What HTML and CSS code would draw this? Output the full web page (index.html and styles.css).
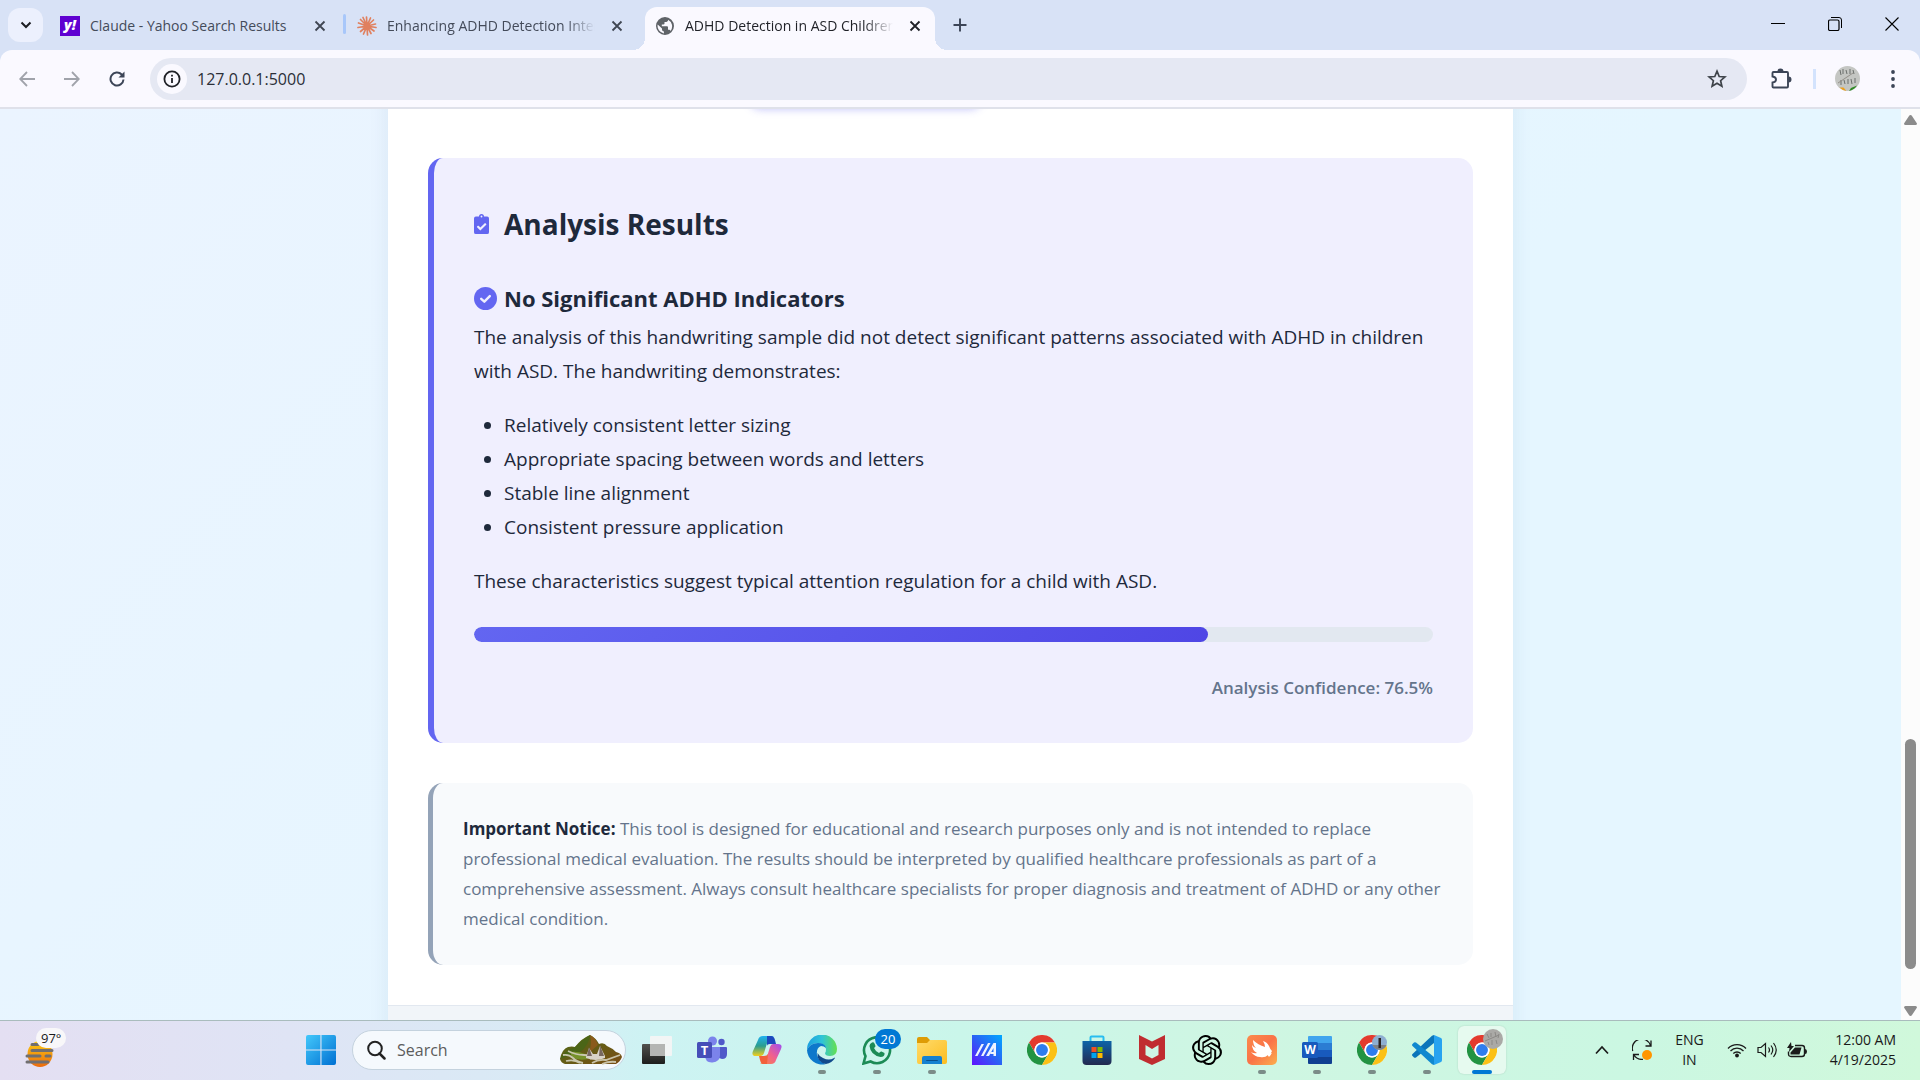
FILE: index.html
```html
<!DOCTYPE html>
<html lang="en">
<head>
<meta charset="utf-8">
<title>ADHD Detection in ASD Children</title>
<link rel="stylesheet" href="styles.css">
</head>
<body>
<svg class="defs" aria-hidden="true">
  <defs>
    <symbol id="close" viewBox="0 0 12 12"><path d="M1.500 1.500l9 9M10.500 1.500l-9 9" fill="none" stroke="currentColor" stroke-width="1.800"/></symbol>
    <symbol id="chrome" viewBox="0 0 48 48">
      <circle cx="24" cy="24" r="24" fill="#fff"/>
      <path d="M3.200 12A24 24 0 0 1 44.800 12H24a12 12 0 0 0-10.400 18z" fill="#e33b2e"/>
      <path d="M3.200 12A24 24 0 0 0 24 48l10.400-18A12 12 0 0 1 13.600 30z" fill="#229342"/>
      <path d="M44.800 12A24 24 0 0 1 24 48l10.400-18A12 12 0 0 0 24 12z" fill="#fbc116"/>
      <circle cx="24" cy="24" r="12" fill="#fff"/><circle cx="24" cy="24" r="9.500" fill="#2f7ded"/>
    </symbol>
    <linearGradient id="win" x1="0" y1="0" x2="1" y2="1"><stop offset="0" stop-color="#43c8fb"/><stop offset="1" stop-color="#0070d2"/></linearGradient>
    <linearGradient id="edgeTop" x1="0" y1="0" x2="1" y2="0"><stop offset="0" stop-color="#1c9fe0"/><stop offset=".5" stop-color="#2fc4d8"/><stop offset="1" stop-color="#66e04f"/></linearGradient>
    <linearGradient id="cpA" x1="0" y1="0" x2="0" y2="1"><stop offset="0" stop-color="#1fb1f0"/><stop offset=".5" stop-color="#2b9d8f"/><stop offset="1" stop-color="#f2cf1c"/></linearGradient>
    <linearGradient id="cpB" x1="1" y1="0" x2="0" y2="1"><stop offset="0" stop-color="#a04df0"/><stop offset=".5" stop-color="#f0608f"/><stop offset="1" stop-color="#fb8a3c"/></linearGradient>
    <linearGradient id="folder" x1="0" y1="0" x2="1" y2="1"><stop offset="0" stop-color="#ffdb6b"/><stop offset="1" stop-color="#fcbd20"/></linearGradient>
    <linearGradient id="asus" x1="0" y1="1" x2="1" y2="0"><stop offset="0" stop-color="#6011ff"/><stop offset=".5" stop-color="#2b62f5"/><stop offset="1" stop-color="#00a8ff"/></linearGradient>
    <linearGradient id="store" x1="0" y1="0" x2="0" y2="1"><stop offset="0" stop-color="#0d64a8"/><stop offset="1" stop-color="#23294f"/></linearGradient>
    <linearGradient id="sun" x1="0" y1="0" x2="0" y2="1"><stop offset="0" stop-color="#fccc12"/><stop offset="1" stop-color="#ec6a0c"/></linearGradient>
    <linearGradient id="hill" x1="0" y1="0" x2="1" y2="1"><stop offset="0" stop-color="#4d6b18"/><stop offset="1" stop-color="#7b4d14"/></linearGradient>
    <linearGradient id="dark" x1="0" y1="0" x2="0" y2="1"><stop offset="0" stop-color="#50514e"/><stop offset="1" stop-color="#1d1e1d"/></linearGradient>
    <linearGradient id="swift" x1="0" y1="0" x2="1" y2="1"><stop offset="0" stop-color="#fb8b4c"/><stop offset=".5" stop-color="#fa7348"/><stop offset="1" stop-color="#fcae4c"/></linearGradient>
  </defs>
</svg>

<header class="tabstrip">
  <button class="tab-search" aria-label="Search tabs"><svg viewBox="0 0 12 12" width="12" height="12"><path d="M1.500 3.500L6 8l4.500-4.500" fill="none" stroke="#1b1d22" stroke-width="2"/></svg></button>
  <nav class="tabs" aria-label="Tabs">
    <div class="tab">
      <span class="yahoo" aria-hidden="true">y!</span>
      <a class="tab-title" href="#">Claude - Yahoo Search Results</a>
      <button class="tab-close" aria-label="Close tab"><svg width="12" height="12"><use href="#close"/></svg></button>
    </div>
    <div class="tab tab-divided">
      <svg class="favicon" viewBox="0 0 20 20" width="20" height="20"><g stroke="#e0805f" stroke-width="1.700" stroke-linecap="round"><path d="M10 10L9.500 1M10 10l3.500-8M10 10l6.500-6M10 10l8.500-2M10 10l9 1.500M10 10l7 5M10 10l4 7.500M10 10l.5 9M10 10l-3.500 8M10 10l-6.500 5.500M10 10l-9 1.500M10 10L1.500 7M10 10L3.500 3.500M10 10L6 1.500"/></g></svg>
      <a class="tab-title" href="#">Enhancing ADHD Detection Inter</a>
      <button class="tab-close" aria-label="Close tab"><svg width="12" height="12"><use href="#close"/></svg></button>
    </div>
    <div class="tab tab-active">
      <svg class="favicon" viewBox="2 2 20 20" width="20" height="20"><path fill="#5f6368" d="M12 3a9 9 0 1 0 0 18 9 9 0 0 0 0-18zm-1 16.400A7.500 7.500 0 0 1 4.700 10.500L9 14.500v1c0 1 .8 1.800 1.800 1.800zM17.500 17c-.2-.7-.9-1.200-1.700-1.200H15v-2.600c0-.5-.4-.9-.9-.9H8.800v-1.800h1.800c.5 0 .9-.4.900-.9V7.900h1.800c1 0 1.800-.8 1.800-1.800v-.4A7.500 7.500 0 0 1 17.500 17z"/></svg>
      <a class="tab-title" href="#" aria-current="page">ADHD Detection in ASD Children</a>
      <button class="tab-close" aria-label="Close tab"><svg width="12" height="12"><use href="#close"/></svg></button>
    </div>
  </nav>
  <button class="new-tab" aria-label="New tab"><svg viewBox="0 0 14 14" width="14" height="14"><path d="M7 0.500v13M.5 7h13" stroke="#3c4557" stroke-width="1.900"/></svg></button>
  <div class="window-controls">
    <button aria-label="Minimize"><svg viewBox="0 0 14 14" width="14" height="14"><path d="M0 6.500h14" stroke="#000"/></svg></button>
    <button aria-label="Restore"><svg viewBox="0 0 14 14" width="14" height="14"><path d="M3 .5h8q2.500 0 2.500 2.500v8" fill="none" stroke="#000"/><rect x=".5" y="3" width="10.500" height="10.500" rx="1.500" fill="none" stroke="#000" stroke-width="1.200"/></svg></button>
    <button aria-label="Close"><svg viewBox="0 0 14 14" width="14" height="14"><path d="M.5.5l13 13M13.500.5l-13 13" stroke="#000" stroke-width="1.100"/></svg></button>
  </div>
</header>

<div class="toolbar">
  <button class="tool" aria-label="Back"><svg viewBox="0 0 16 16" width="16" height="16"><path d="M16 8H1.500M8 1L1.200 8 8 15" fill="none" stroke="#a0a3ab" stroke-width="1.800"/></svg></button>
  <button class="tool" aria-label="Forward"><svg viewBox="0 0 16 16" width="16" height="16"><path d="M0 8h14.500M8 1l6.800 7L8 15" fill="none" stroke="#a0a3ab" stroke-width="1.800"/></svg></button>
  <button class="tool" aria-label="Reload"><svg viewBox="0 0 16 16" width="16" height="16"><path d="M14.500 8.500A6.500 6.500 0 1 1 12.700 3.500L14.500 5.500" fill="none" stroke="#3c4557" stroke-width="2"/><path d="M15.500.5v6h-6z" fill="#3c4557"/></svg></button>
  <div class="omnibox">
    <button class="site-info" aria-label="Site information"><svg viewBox="0 0 18 18" width="18" height="18"><circle cx="9" cy="9" r="7.600" fill="none" stroke="#1f2127" stroke-width="1.800"/><path d="M9 8v5M9 4.800v1.800" stroke="#1f2127" stroke-width="1.800"/></svg></button>
    <input class="address" type="text" aria-label="Address" value="127.0.0.1:5000">
    <button class="star" aria-label="Bookmark this tab"><svg viewBox="0 0 20 20" width="20" height="20"><path d="M10 2.200l2.200 5.300 5.700.5-4.300 3.700 1.300 5.600L10 14.300l-4.900 3 1.300-5.600L2.100 8l5.700-.5z" fill="none" stroke="#3e4349" stroke-width="1.700"/></svg></button>
  </div>
  <button class="tool" aria-label="Extensions"><svg viewBox="0 0 22 22" width="22" height="22"><path d="M3.500 4H17q1 0 1 1v13.500q0 1-1 1H3.500q-1 0-1-1V14.500q3.500-.4 3.500-3t-3.500-3V5q0-1 1-1z" fill="none" stroke="#3c4557" stroke-width="1.900"/><path d="M7.500 3.500a3 3 0 0 1 6 0zM18.500 8.500a3 3 0 0 1 0 6z" fill="#3c4557"/></svg></button>
  <span class="tool-divider"></span>
  <button class="tool" aria-label="Profile"><svg viewBox="0 0 25 25" width="25" height="25"><circle cx="12.500" cy="12.500" r="12.500" fill="#c4c6c3"/><path d="M5 4l1 5M8 3v5M11 4l1 4M15 3v5M18 4l1 4M6 14v5M9 14l1 4M13 13v5M16 13l1 5M20 12v5" stroke="#6b6f6c"/><path d="M3 17L18 7" stroke="#94908a"/><path d="M4.500 21.500h4l3 3.500a12.500 12.500 0 0 1-7-3.500z" fill="#eea01d"/><path d="M16 22l6-2.500a12.500 12.500 0 0 1-8 5.500z" fill="#2f8a25"/></svg></button>
  <button class="tool" aria-label="Menu"><svg viewBox="0 0 4 18" width="4" height="18" fill="#3c4557"><circle cx="2" cy="2" r="1.900"/><circle cx="2" cy="9" r="1.900"/><circle cx="2" cy="16" r="1.900"/></svg></button>
</div>

<div class="viewport">
  <div class="page">
    <main class="container">
      <div class="content">
        <div class="action-glow"></div>
        <section class="result">
          <h2><svg viewBox="0 0 384 512" width="15" height="20"><path fill="#6366f1" d="M336 64h-80a64 64 0 0 0-128 0H48a48 48 0 0 0-48 48v352a48 48 0 0 0 48 48h288a48 48 0 0 0 48-48V112a48 48 0 0 0-48-48zM192 40a24 24 0 1 1 0 48 24 24 0 0 1 0-48zm121 234L170 416q-8 8-16 0l-76-76q-8-8 0-17l22-21q8-8 17 0l46 46 112-111q8-8 17 0l21 21q8 8 0 16z"/></svg>Analysis Results</h2>
          <h3><svg viewBox="0 0 24 24" width="23" height="23"><circle cx="12" cy="12" r="12" fill="#6366f1"/><path d="M7.500 12.300l3.300 3L16.500 9.500" fill="none" stroke="#f0effe" stroke-width="2.500" stroke-linecap="round" stroke-linejoin="round"/></svg>No Significant ADHD Indicators</h3>
          <p>The analysis of this handwriting sample did not detect significant patterns associated with ADHD in children with ASD. The handwriting demonstrates:</p>
          <ul>
            <li>Relatively consistent letter sizing</li>
            <li>Appropriate spacing between words and letters</li>
            <li>Stable line alignment</li>
            <li>Consistent pressure application</li>
          </ul>
          <p>These characteristics suggest typical attention regulation for a child with ASD.</p>
          <div class="meter" role="progressbar" aria-label="Analysis Confidence" aria-valuenow="76.5" aria-valuemin="0" aria-valuemax="100"><div class="meter-fill" style="width:76.5%"></div></div>
          <p class="confidence">Analysis Confidence: 76.5%</p>
        </section>
        <section class="notice"><p><strong>Important Notice:</strong> This tool is designed for educational and research purposes only and is not intended to replace professional medical evaluation. The results should be interpreted by qualified healthcare professionals as part of a comprehensive assessment. Always consult healthcare specialists for proper diagnosis and treatment of ADHD or any other medical condition.</p></section>
      </div>
      <footer class="page-footer"></footer>
    </main>
  </div>
  <div class="scrollbar" aria-hidden="true">
    <svg viewBox="0 0 13 10" width="13" height="10"><path d="M6.500 0q1 0 1.500 1l5 7.500q0 1.500-1.500 1.500h-10Q0 10 0 8.500L5 1q.5-1 1.500-1z" fill="#8b8b8b"/></svg>
    <div class="track"><div class="thumb"></div></div>
    <svg viewBox="0 0 13 10" width="13" height="10"><path d="M6.500 10q1 0 1.500-1l5-7.500Q13 0 11.500 0h-10Q0 0 0 1.500L5 9q.5 1 1.500 1z" fill="#8b8b8b"/></svg>
  </div>
</div>

<footer class="taskbar">
  <button class="weather" aria-label="Weather">
    <svg viewBox="0 0 30 30" width="30" height="30"><ellipse cx="15" cy="15" rx="12.500" ry="13" fill="url(#sun)"/><path d="M7 5.500h6M7 11.500h20M2 17h13M21 17h4M2 23h21" stroke="#716f70" stroke-width="3" stroke-linecap="round"/></svg>
    <span class="temp">97°</span>
  </button>
  <div class="apps">
    <button class="app" aria-label="Start"><svg viewBox="0 0 30 30" width="30" height="30"><path fill="url(#win)" d="M2 0h12.400v14.400H0V2q0-2 2-2zM15.500 0H28q2 0 2 2v12.400H15.500zM0 15.500h14.400V30H2q-2 0-2-2zM15.500 15.500H30V28q0 2-2 2H15.500z"/></svg></button>
    <div class="search">
      <svg viewBox="0 0 20 20" width="20" height="20"><circle cx="9" cy="8.500" r="6.800" fill="none" stroke="#222" stroke-width="2"/><path d="M13.500 13.500l5 5" stroke="#222" stroke-width="2.500" stroke-linecap="round"/></svg>
      <input type="text" aria-label="Search" placeholder="Search">
      <svg viewBox="0 0 62 30" width="62" height="30">
        <path d="M0 24Q2 14 8 12q4-1 7 0Q22 3 30 0q6 3 9 9 5-2 8 2 5 2 9 6 5 1 6 5-2 5-6 7H5q-4-1-5-5z" fill="url(#hill)"/>
        <path d="M30 0q6 3 8 10l-9 8q3-9 1-18z" fill="#8a5a1c"/>
        <path d="M15 12q8-8 15-12-2 12-10 17-8 2-20 7 4-8 15-12z" fill="#4b6517"/>
        <path d="M10 17q8-1 15 2l3 5q-10 2-16-2z" fill="#76912a"/>
        <path d="M3 20q6-1 10 3t10 5M8 16q8 4 16 4t6 4M6 26q8-2 14 2" stroke="#c9c7ae" stroke-width="1.800" fill="none"/>
        <path d="M26 22l3-9 4 6h4l3-8 5 10v2q-9 4-19 0z" fill="#d8d3c8"/>
        <path d="M29 12l3 9h-5zM40 10l4 11h-5z" fill="#77675f"/>
        <path d="M32 28q6-4 14-3l14-5M42 29q7-3 14-2" stroke="#c9c2a8" stroke-width="1.800" fill="none"/>
      </svg>
    </div>
    <button class="app" aria-label="Task view"><svg viewBox="0 0 30 30" width="30" height="30"><rect x="0" y="9" width="23" height="20" rx="1" fill="url(#dark)"/><rect x="8" y="1" width="22" height="20" rx="1" fill="#f3f4f4" opacity=".95"/><path d="M8 9h15v12H8z" fill="#b4b5b3"/></svg></button>
    <button class="app" aria-label="Teams"><svg viewBox="0 0 30 30" width="30" height="30"><circle cx="15.500" cy="6" r="4.500" fill="#7b83eb"/><circle cx="24.500" cy="7" r="3.200" fill="#5059c9"/><path d="M20 12h9q1 0 1 1v6q0 5-5 5-3 0-5-3z" fill="#5059c9"/><path d="M8 12h15v8q0 7-7.500 7.500T8 20z" fill="#7b83eb"/><rect y="7" width="15" height="16" rx="1.500" fill="#464eb8"/><text x="7.500" y="20" text-anchor="middle" class="glyph" font-size="13">T</text></svg></button>
    <button class="app" aria-label="Copilot"><svg viewBox="0 0 30 30" width="30" height="30"><path d="M18 1h-7Q7 1 6 5L1 16q-2 5 3 5h5q2 0 3-3l4-13q1-3 6-3-1-1-4-1z" fill="url(#cpA)"/><path d="M15 1h4q3 0 4 4l1 4h-6q-3 0-3 2z" fill="#1c48bd"/><path d="M12 29h7q4 0 5-4l5-11q2-5-3-5h-5q-2 0-3 3l-4 13q-1 3-6 3 1 1 4 1z" fill="url(#cpB)"/><path d="M15 29h-4q-2 0-3-4l-1-4h5q3 0 4-2z" fill="#f2603c"/></svg></button>
    <button class="app running" aria-label="Edge"><svg viewBox="0 0 30 30" width="30" height="30"><path d="M0 15A15 15 0 0 1 30 14q0 7-7 7-5 0-5-3 1-1 1-4-1-6-8-6Q3 8 0 15z" fill="url(#edgeTop)"/><path d="M0 15Q3 8 11 8q7 0 8 5-2-2-5-2-5 2-4 9 2 7 9 9A15 15 0 0 1 0 15z" fill="#0d78cb"/><path d="M10.500 18q-1 9 8.500 11 6-1 9-6 0-1-1 0-5 3-11 0-4-2-5.500-5z" fill="#114a8c"/></svg></button>
    <button class="app running" aria-label="WhatsApp"><svg viewBox="0 0 30 30" width="30" height="30"><path d="M1.500 28.500l2-7.300A13 13 0 1 1 8.600 26.500z" fill="none" stroke="#1c8b56" stroke-width="2.600"/><path d="M10 7.500q1.500-1 2.500 1l1 2.500q0 1-1.500 2 1.500 3.500 5 5 1.500-2 2.500-1.500l3 1.500q.5 4-4 4-10-2-11-11 0-2.500 2.500-3.500z" fill="#1c8b56"/></svg><span class="badge">20</span></button>
    <button class="app running" aria-label="File Explorer"><svg viewBox="0 0 30 30" width="30" height="30"><path d="M0 4q0-2 2-2h8l3 3h15v6H0z" fill="#de9c06"/><path d="M0 8h10l3-3h15q2 0 2 2v20q0 2-2 2H2q-2 0-2-2z" fill="url(#folder)"/><path d="M5 29v-6q0-2 2-2h16q2 0 2 2v6z" fill="#1681d0"/><path d="M9 26q0-1 1-1h10q1 0 1 1z" fill="#0a4f8c"/></svg></button>
    <button class="app" aria-label="MyASUS"><svg viewBox="0 0 30 30" width="30" height="30"><path d="M0 0h30v30H0z" fill="url(#asus)"/><path d="M3 21L9.500 9h2.500L5.500 21zM9 21L16 8h2.500L11.500 21zM14 21l7.500-13H24v13h-2.500V13L17 21z" fill="#eef3ff"/><path d="M19 17h4v2h-5z" fill="#eef3ff"/></svg></button>
    <button class="app" aria-label="Chrome"><svg width="30" height="30"><use href="#chrome"/></svg></button>
    <button class="app" aria-label="Microsoft Store"><svg viewBox="0 0 30 30" width="30" height="30"><path d="M8.500 7V2.500q0-1 1-1h11q1 0 1 1V7" fill="none" stroke="#29bdf0" stroke-width="2"/><path d="M.5 6h29v20q0 4-4 4h-21q-4 0-4-4z" fill="url(#store)"/><path d="M9.500 12h5v5h-5z" fill="#f25022"/><path d="M15.500 12h5v5h-5z" fill="#7fba00"/><path d="M9.500 18h5v5h-5z" fill="#00a4ef"/><path d="M15.500 18h5v5h-5z" fill="#ffb900"/></svg></button>
    <button class="app" aria-label="McAfee"><svg viewBox="0 0 30 30" width="30" height="30"><path d="M2 0l13 6.500L28 0v24l-13 6-13-6zM8.500 10v10l6.500 3.500 6.500-3.500V10L15 14z" fill="#c02c30" fill-rule="evenodd"/></svg></button>
    <button class="app" aria-label="ChatGPT"><svg viewBox="0 0 24 24" width="30" height="30"><path d="M22.2819 9.8211a5.9847 5.9847 0 0 0-.5157-4.9108 6.0462 6.0462 0 0 0-6.5098-2.9A6.0651 6.0651 0 0 0 4.9807 4.1818a5.9847 5.9847 0 0 0-3.9977 2.9 6.0462 6.0462 0 0 0 .7427 7.0966 5.98 5.98 0 0 0 .511 4.9107 6.051 6.051 0 0 0 6.5146 2.9001A5.9847 5.9847 0 0 0 13.2599 24a6.0557 6.0557 0 0 0 5.7718-4.2058 5.9894 5.9894 0 0 0 3.9977-2.9001 6.0557 6.0557 0 0 0-.7475-7.0729zm-9.022 12.6081a4.4755 4.4755 0 0 1-2.8764-1.0408l.1419-.0804 4.7783-2.7582a.7948.7948 0 0 0 .3927-.6813v-6.7369l2.02 1.1686a.071.071 0 0 1 .038.052v5.5826a4.504 4.504 0 0 1-4.4945 4.4944zm-9.6607-4.1254a4.4708 4.4708 0 0 1-.5346-3.0137l.142.0852 4.783 2.7582a.7712.7712 0 0 0 .7806 0l5.8428-3.3685v2.3324a.0804.0804 0 0 1-.0332.0615L9.74 19.9502a4.4992 4.4992 0 0 1-6.1408-1.6464zM2.3408 7.8956a4.485 4.485 0 0 1 2.3655-1.9728V11.6a.7664.7664 0 0 0 .3879.6765l5.8144 3.3543-2.0201 1.1685a.0757.0757 0 0 1-.071 0l-4.8303-2.7865A4.504 4.504 0 0 1 2.3408 7.872zm16.5963 3.8558L13.1038 8.364 15.1192 7.2a.0757.0757 0 0 1 .071 0l4.8303 2.7913a4.4944 4.4944 0 0 1-.6765 8.1042v-5.6772a.79.79 0 0 0-.407-.667zm2.0107-3.0231l-.142-.0852-4.7735-2.7818a.7759.7759 0 0 0-.7854 0L9.409 9.2297V6.8974a.0662.0662 0 0 1 .0284-.0615l4.8303-2.7866a4.4992 4.4992 0 0 1 6.6802 4.66zM8.3065 12.863l-2.02-1.1638a.0804.0804 0 0 1-.038-.0567V6.0742a4.4992 4.4992 0 0 1 7.3757-3.4537l-.142.0805L8.704 5.459a.7948.7948 0 0 0-.3927.6813zm1.0976-2.3654l2.602-1.4998 2.6069 1.4998v2.9994l-2.5974 1.4997-2.6067-1.4997Z"/></svg></button>
    <button class="app running" aria-label="Swift"><svg viewBox="0 0 30 30" width="30" height="30"><rect width="30" height="30" rx="5" fill="url(#swift)"/><path d="M6 5q0 5 3 8-3-1-4-3 0 5 5 8-3 1-6-1 4 5 9 5 5 1 8-2l2 1 1-3 1-2q-2-2-3-5-2-4-6-5 2 3 2 6Q11 10 6 5z" fill="#fff"/><path d="M20 19l5-1-3 4z" fill="#fff"/></svg></button>
    <button class="app running" aria-label="Word"><svg viewBox="0 0 30 30" width="30" height="30"><path d="M7 1h22q1 0 1 1v6H6V2q0-1 1-1z" fill="#41a5ee"/><path d="M6 8h24v7H6z" fill="#2b7cd3"/><path d="M6 15h24v7H6z" fill="#185abd"/><path d="M6 22h24v6q0 1-1 1H7q-1 0-1-1z" fill="#103f91"/><rect y="7" width="16" height="16" rx="1.500" fill="#185abd"/><text x="8" y="19" text-anchor="middle" class="glyph" font-size="12">W</text></svg></button>
    <button class="app running" aria-label="Chrome"><svg viewBox="0 0 30 30" width="30" height="30"><use href="#chrome" width="30" height="30"/><circle cx="22.500" cy="7.500" r="7.500" fill="#8eaed1"/><path d="M15.500 10h14a7.500 7.500 0 0 1-14 0z" fill="#7d8187"/><path d="M21.500 3h2.500v10h-2.500z" fill="#2b2323"/></svg></button>
    <button class="app running" aria-label="Visual Studio Code"><svg viewBox="0 0 30 30" width="30" height="30"><path d="M22 0l7 3q1 .5 1 2v20q0 1.500-1 2l-7 3z" fill="#27a3f0"/><path d="M22 0v8L4 22.500q-1 .7-2 0L.5 21q-1-1 0-2L20 .8z" fill="#0b75ba"/><path d="M22 30v-8L4 7.500q-1-.7-2 0L.5 9q-1 1 0 2L20 29.200z" fill="#1088cf"/></svg></button>
    <button class="app running app-current" aria-label="Chrome, current window"><svg viewBox="0 0 30 30" width="30" height="30"><use href="#chrome" width="30" height="30"/></svg><svg class="avatar-badge" viewBox="0 0 20 20" width="20" height="20"><circle cx="10" cy="10" r="10" fill="#aaa9a6"/><path d="M4 5l2 4M8 4v4M12 3l1 5M16 5l-1 4M5 13l1 3M9 11v5M13 11l1 4M2 12l14-6" stroke="#8b8986"/></svg></button>
  </div>
  <div class="tray">
    <button aria-label="Show hidden icons"><svg viewBox="0 0 14 10" width="14" height="10"><path d="M1 8.500l6-6.500 6 6.500" fill="none" stroke="#1a1a1a" stroke-width="1.700"/></svg></button>
    <button aria-label="Updates"><svg viewBox="0 0 20 20" width="20" height="20"><path d="M.7 11A9 9 0 0 1 18.500 5.500M19 .5V6h-5.500M11 19.300q-6 .7-9-4.300M1.500 20v-5.500H7" fill="none" stroke="#1a1a1a" stroke-width="1.300"/><circle cx="15" cy="15" r="5" fill="#ff9500"/></svg></button>
    <button class="language">ENG<br>IN</button>
    <button class="status" aria-label="Network, volume and battery">
      <svg viewBox="0 0 20 16" width="20" height="16"><path d="M1 6.500a12.500 12.500 0 0 1 18 0M3.500 9a9 9 0 0 1 13 0M6.300 11.500a5.300 5.300 0 0 1 7.400 0" fill="none" stroke="#1a1a1a" stroke-width="1.300"/><circle cx="10" cy="13.500" r="1.900" fill="#1a1a1a"/></svg>
      <svg viewBox="0 0 20 16" width="20" height="16"><path d="M1 5.500h3L8.500 1.500v13L4 10.500H1zM11.500 5.500q2 2.500 0 5M14 3.500q3.500 4.500 0 9M16.500 1q5.500 7 0 14" fill="none" stroke="#1a1a1a" stroke-width="1.200"/></svg>
      <svg viewBox="0 0 20 16" width="20" height="16"><path d="M8 3.500h7q2.500 0 2.500 2.500v6q0 2.500-2.500 2.500H4Q1.500 14.500 1.500 12V9.500" fill="none" stroke="#1a1a1a" stroke-width="1.400"/><path d="M3.500 12.500v-2L8 5.500h6.500l-2 7zM18 7q2 0 2 2.500T18 12zM4 0L0 6h2.500L2 10l5-6H4.500z" fill="#1a1a1a"/></svg>
    </button>
    <button class="clock">12:00 AM<br>4/19/2025</button>
  </div>
</footer>
</body>
</html>
```
FILE: styles.css
```css
* { box-sizing: border-box; }

body {
  margin: 0;
  height: 100vh;
  display: flex;
  flex-direction: column;
  overflow: hidden;
  background: #d8e2f6;
  font-family: "Open Sans", "Noto Sans", sans-serif;
  color: #1e293b;
}

button {
  margin: 0;
  padding: 0;
  border: 0;
  background: none;
  font: inherit;
  color: inherit;
}

input {
  border: 0;
  padding: 0;
  min-width: 0;
  background: none;
  font: inherit;
  color: inherit;
  outline: none;
}

svg { display: block; flex: none; }
.defs { position: absolute; width: 0; height: 0; }
.glyph { font-family: "Open Sans", sans-serif; font-weight: 700; fill: #fff; }

/* Tab strip */
.tabstrip {
  display: flex;
  align-items: center;
  height: 50px;
  padding-left: 8px;
  background: #d8e2f6;
}

.tab-search {
  display: grid;
  place-items: center;
  width: 35px;
  height: 34px;
  border-radius: 12px;
  background: #ecf0fd;
}

.tabs { display: flex; align-self: flex-end; margin-left: 5px; }

.tab {
  position: relative;
  display: flex;
  align-items: center;
  gap: 10px;
  width: 297px;
  height: 43px;
  padding: 0 13px 6px 12px;
  color: #444b5a;
}

.tab-divided::before {
  content: "";
  position: absolute;
  left: -2px;
  top: 7px;
  width: 3px;
  height: 20px;
  border-radius: 2px;
  background: #a8c7fa;
}

.tab-title {
  flex: 1;
  overflow: hidden;
  white-space: nowrap;
  font-size: 14px;
  color: inherit;
  text-decoration: none;
  mask-image: linear-gradient(to right, #000 86%, transparent);
}

.tab:first-child .tab-title { mask-image: none; }
.tab-close { display: grid; place-items: center; width: 24px; height: 24px; color: #3f4652; }

.tab-active {
  width: 290px;
  margin-left: 3px;
  padding-left: 10px;
  padding-right: 8px;
  border-radius: 12px 12px 0 0;
  background: #faf9ff;
  color: #1f2127;
}

.tab-active .tab-close { color: #1f2127; }

.tab-active::before,
.tab-active::after {
  content: "";
  position: absolute;
  bottom: 0;
  width: 12px;
  height: 12px;
}

.tab-active::before { left: -12px; background: radial-gradient(circle at 0 0, transparent 12px, #faf9ff 12px); }
.tab-active::after { right: -12px; background: radial-gradient(circle at 100% 0, transparent 12px, #faf9ff 12px); }

.yahoo {
  width: 20px;
  height: 20px;
  background: #5f01d1;
  color: #fff;
  font-size: 14px;
  font-weight: 800;
  font-style: italic;
  line-height: 17px;
  text-align: center;
}

.new-tab { display: grid; place-items: center; width: 30px; height: 34px; margin-left: 10px; }
.window-controls { display: flex; margin-left: auto; }
.window-controls button { display: grid; place-items: center; width: 57px; height: 50px; padding-bottom: 2px; }

/* Address bar row */
.toolbar {
  display: flex;
  align-items: center;
  height: 59px;
  padding: 0 5px 0 4px;
  border-bottom: 2px solid #dfe1ea;
  border-radius: 12px 12px 0 0;
  background: #faf9ff;
}

.tool { display: grid; place-items: center; width: 45px; height: 40px; }
.tool-divider { width: 3px; height: 20px; margin: 0 9px 0 10px; background: #d3e3fd; }

.omnibox {
  flex: 1;
  display: flex;
  align-items: center;
  height: 42px;
  margin: 0 11px;
  padding: 0 20px 0 7px;
  border-radius: 21px;
  background: #e5e8f3;
}

.site-info { display: grid; place-items: center; width: 30px; height: 30px; border-radius: 50%; background: #faf9ff; }
.address { flex: 1; margin-left: 10px; font-size: 16px; color: #2b2f38; }

/* Page area */
.viewport { flex: 1; display: flex; min-height: 0; overflow: hidden; }

.page {
  flex: 1;
  overflow: hidden;
  background: linear-gradient(135deg, #ebf4ff, #e5f6ff 60%);
}

.container {
  max-width: 1125px;
  margin: 0 auto;
  background: #fff;
  box-shadow: 0 5px 20px rgba(30, 70, 120, 0.08);
}

.content { padding: 0 40px 40px; }

.action-glow {
  width: 233px;
  height: 40px;
  margin: -43px auto 52px 321px;
  border-radius: 12px;
  background: #6366f1;
  box-shadow: 0 3px 9px rgba(99, 102, 241, 0.4);
}

.result {
  padding: 40px;
  border-left: 6px solid #6366f1;
  border-radius: 15px;
  background: #f0effe;
  font-size: 19px;
  line-height: 34px;
}

h2, h3 { display: flex; align-items: center; }
h2 { gap: 15px; margin: 0 0 30px; font-size: 28px; font-weight: 700; line-height: 52px; }
h3 { gap: 7px; margin: 0 0 4px; font-size: 22px; font-weight: 700; line-height: 36px; }
p { margin: 0; }
ul { margin: 20px 0; padding-left: 30px; }

.meter {
  height: 15px;
  margin: 29px 0 31px;
  border-radius: 8px;
  background: #e2e8f0;
  overflow: hidden;
}

.meter-fill { height: 100%; border-radius: 8px; background: linear-gradient(135deg, #6366f1, #4f46e5); }

.confidence {
  font-size: 17px;
  font-weight: 600;
  line-height: 30px;
  color: #64748b;
  text-align: right;
}

.notice {
  margin-top: 40px;
  padding: 31px 30px;
  border-left: 5px solid #94a3b8;
  border-radius: 15px;
  background: #f8fafc;
  font-size: 17px;
  line-height: 30px;
  color: #64748b;
}

.notice strong { color: #1e293b; }
.page-footer { height: 200px; border-top: 1px solid #e2e8f0; background: #f1f5f9; }

.scrollbar {
  display: flex;
  flex-direction: column;
  align-items: center;
  gap: 6px;
  width: 19px;
  padding: 6px 0 4px;
  background: #fcfcfc;
}

.track { flex: 1; display: flex; flex-direction: column; justify-content: flex-end; }
.thumb { width: 11px; height: 26.5%; margin-bottom: 31px; border-radius: 6px; background: #8b8b8b; }

/* Taskbar */
.taskbar {
  display: flex;
  align-items: center;
  height: 60px;
  padding-bottom: 1px;
  border-top: 1px solid #a9bcbd;
  background: linear-gradient(to right, #e4dff2, #dfe4f5 15%, #d9eaf5 27%, #cdf3f3 34%, #caf6ea 50%, #cff6e2 65%, #cbf7e2 85%, #d0f8db);
}

.weather { position: relative; flex: none; width: 70px; height: 48px; margin-right: 227px; padding: 8px 0 0 25px; }

.temp {
  position: absolute;
  left: 36px;
  top: 2px;
  padding: 0 5px;
  border-radius: 10px;
  background: #f8f7f9;
  font-size: 13px;
  line-height: 20px;
  color: #1a1a1a;
}

.apps { display: flex; align-items: center; gap: 7px; }
.app { position: relative; display: grid; place-items: center; width: 48px; height: 48px; border-radius: 6px; }

.running::after {
  content: "";
  position: absolute;
  left: 20px;
  bottom: 0;
  width: 8px;
  height: 4px;
  border-radius: 2px;
  background: #7b8c88;
}

.app-current { background: #e6faef; box-shadow: 0 0 2px rgba(0, 0, 0, 0.15); }
.app-current::after { left: 14px; width: 20px; background: #0078d4; }
.avatar-badge { position: absolute; right: 3px; top: 3px; }

.badge {
  position: absolute;
  left: 22px;
  top: 3px;
  width: 26px;
  height: 20px;
  border-radius: 10px;
  background: #0078d4;
  font-size: 13px;
  line-height: 20px;
  color: #fff;
}

.search {
  display: flex;
  align-items: center;
  gap: 11px;
  width: 274px;
  height: 40px;
  padding: 0 3px 0 13px;
  border: 1px solid #c4d2de;
  border-radius: 20px;
  background: #f5f9fd;
}

.search input { flex: 1; font-size: 16px; color: #5c5c5c; }
.search input::placeholder { color: #5c5c5c; opacity: 1; }

.tray {
  display: flex;
  align-items: center;
  gap: 23px;
  margin-left: auto;
  padding-right: 24px;
  font-size: 14px;
  line-height: 20px;
  color: #1a1a1a;
}

.status { display: flex; gap: 10px; }
.clock { text-align: right; }
```
